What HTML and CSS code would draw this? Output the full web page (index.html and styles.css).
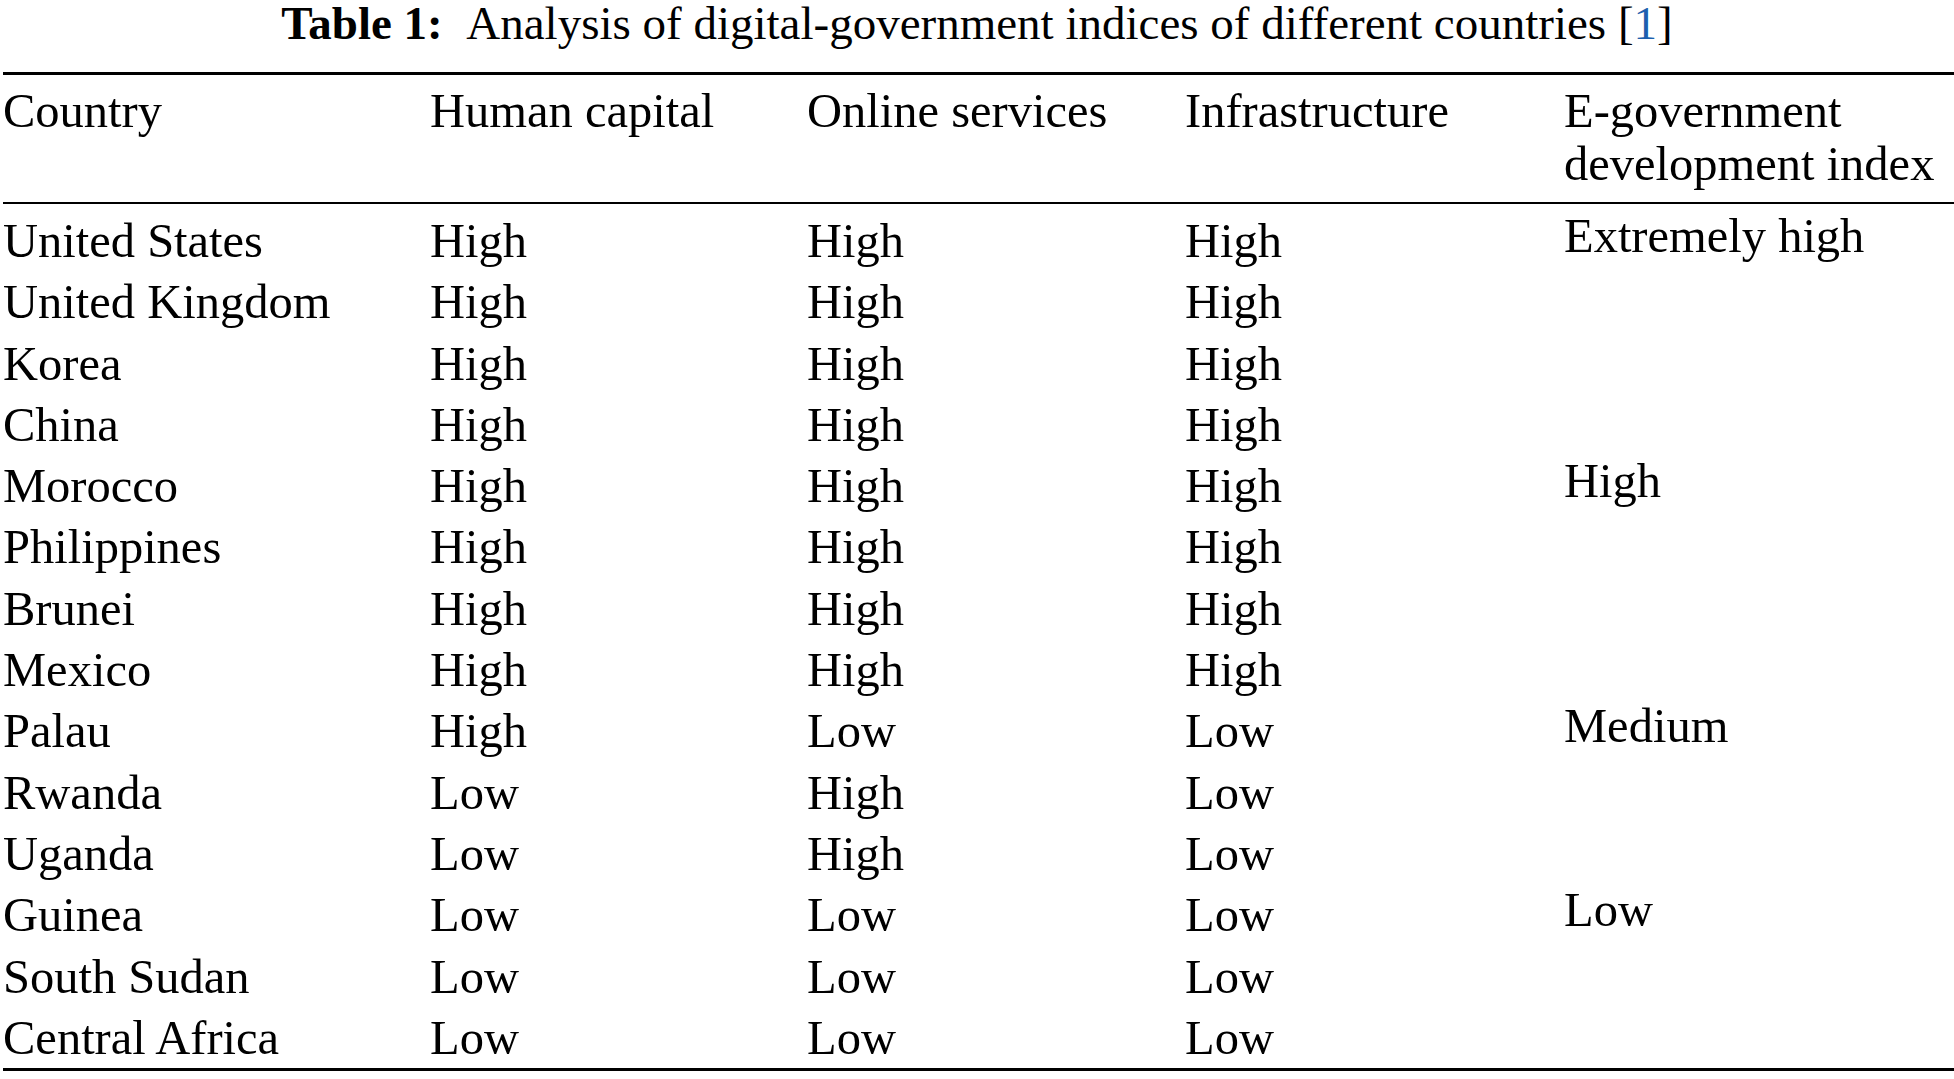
FILE: index.html
```html
<!DOCTYPE html>
<html lang="en">
<head>
<meta charset="utf-8">
<title>Table 1</title>
<link rel="stylesheet" href="styles.css">
</head>
<body>
<div class="caption"><b>Table 1:</b>&nbsp;&nbsp;Analysis of digital-government indices of different countries [<a class="ref" href="#r1">1</a>]</div>
<table class="data">
  <colgroup>
    <col class="c1"><col class="c2"><col class="c3"><col class="c4"><col class="c5">
  </colgroup>
  <thead>
    <tr>
      <th>Country</th>
      <th>Human capital</th>
      <th>Online services</th>
      <th>Infrastructure</th>
      <th>E-government<br>development index</th>
    </tr>
  </thead>
  <tbody>
    <tr><td>United States</td><td>High</td><td>High</td><td>High</td><td class="grp">Extremely high</td></tr>
    <tr><td>United Kingdom</td><td>High</td><td>High</td><td>High</td><td></td></tr>
    <tr><td>Korea</td><td>High</td><td>High</td><td>High</td><td></td></tr>
    <tr><td>China</td><td>High</td><td>High</td><td>High</td><td></td></tr>
    <tr><td>Morocco</td><td>High</td><td>High</td><td>High</td><td class="grp">High</td></tr>
    <tr><td>Philippines</td><td>High</td><td>High</td><td>High</td><td></td></tr>
    <tr><td>Brunei</td><td>High</td><td>High</td><td>High</td><td></td></tr>
    <tr><td>Mexico</td><td>High</td><td>High</td><td>High</td><td></td></tr>
    <tr><td>Palau</td><td>High</td><td>Low</td><td>Low</td><td class="grp">Medium</td></tr>
    <tr><td>Rwanda</td><td>Low</td><td>High</td><td>Low</td><td></td></tr>
    <tr><td>Uganda</td><td>Low</td><td>High</td><td>Low</td><td></td></tr>
    <tr><td>Guinea</td><td>Low</td><td>Low</td><td>Low</td><td class="grp">Low</td></tr>
    <tr><td>South Sudan</td><td>Low</td><td>Low</td><td>Low</td><td></td></tr>
    <tr><td>Central Africa</td><td>Low</td><td>Low</td><td>Low</td><td></td></tr>
  </tbody>
</table>
</body>
</html>
```

FILE: styles.css
```css
html, body {
  margin: 0;
  padding: 0;
  background: #ffffff;
  color: #000000;
  font-family: "Liberation Serif", "Times New Roman", serif;
}

.caption {
  font-size: 47px;
  line-height: 46px;
  text-align: center;
  margin: 0 0 26px 0;
  white-space: nowrap;
}

.caption b {
  font-weight: bold;
}

.ref {
  color: #1d5fae;
  text-decoration: none;
}

.data {
  border-collapse: collapse;
  margin-left: 3px;
  width: calc(100% - 3px);
  font-size: 48.5px;
  table-layout: fixed;
  border-top: 3px solid #000;
  border-bottom: 3px solid #000;
}

.c1 { width: 427px; }
.c2 { width: 377px; }
.c3 { width: 378px; }
.c4 { width: 379px; }

.data th {
  font-weight: normal;
  text-align: left;
  vertical-align: top;
  line-height: 53.6px;
  padding: 8.8px 0 11px 0;
  border-bottom: 2px solid #000;
  white-space: nowrap;
}

.data td {
  text-align: left;
  vertical-align: top;
  line-height: 61.3px;
  padding: 0;
  white-space: nowrap;
}

.data tbody tr:first-child td {
  padding-top: 6px;
}

.data td.grp {
  line-height: 51.3px;
}
```
